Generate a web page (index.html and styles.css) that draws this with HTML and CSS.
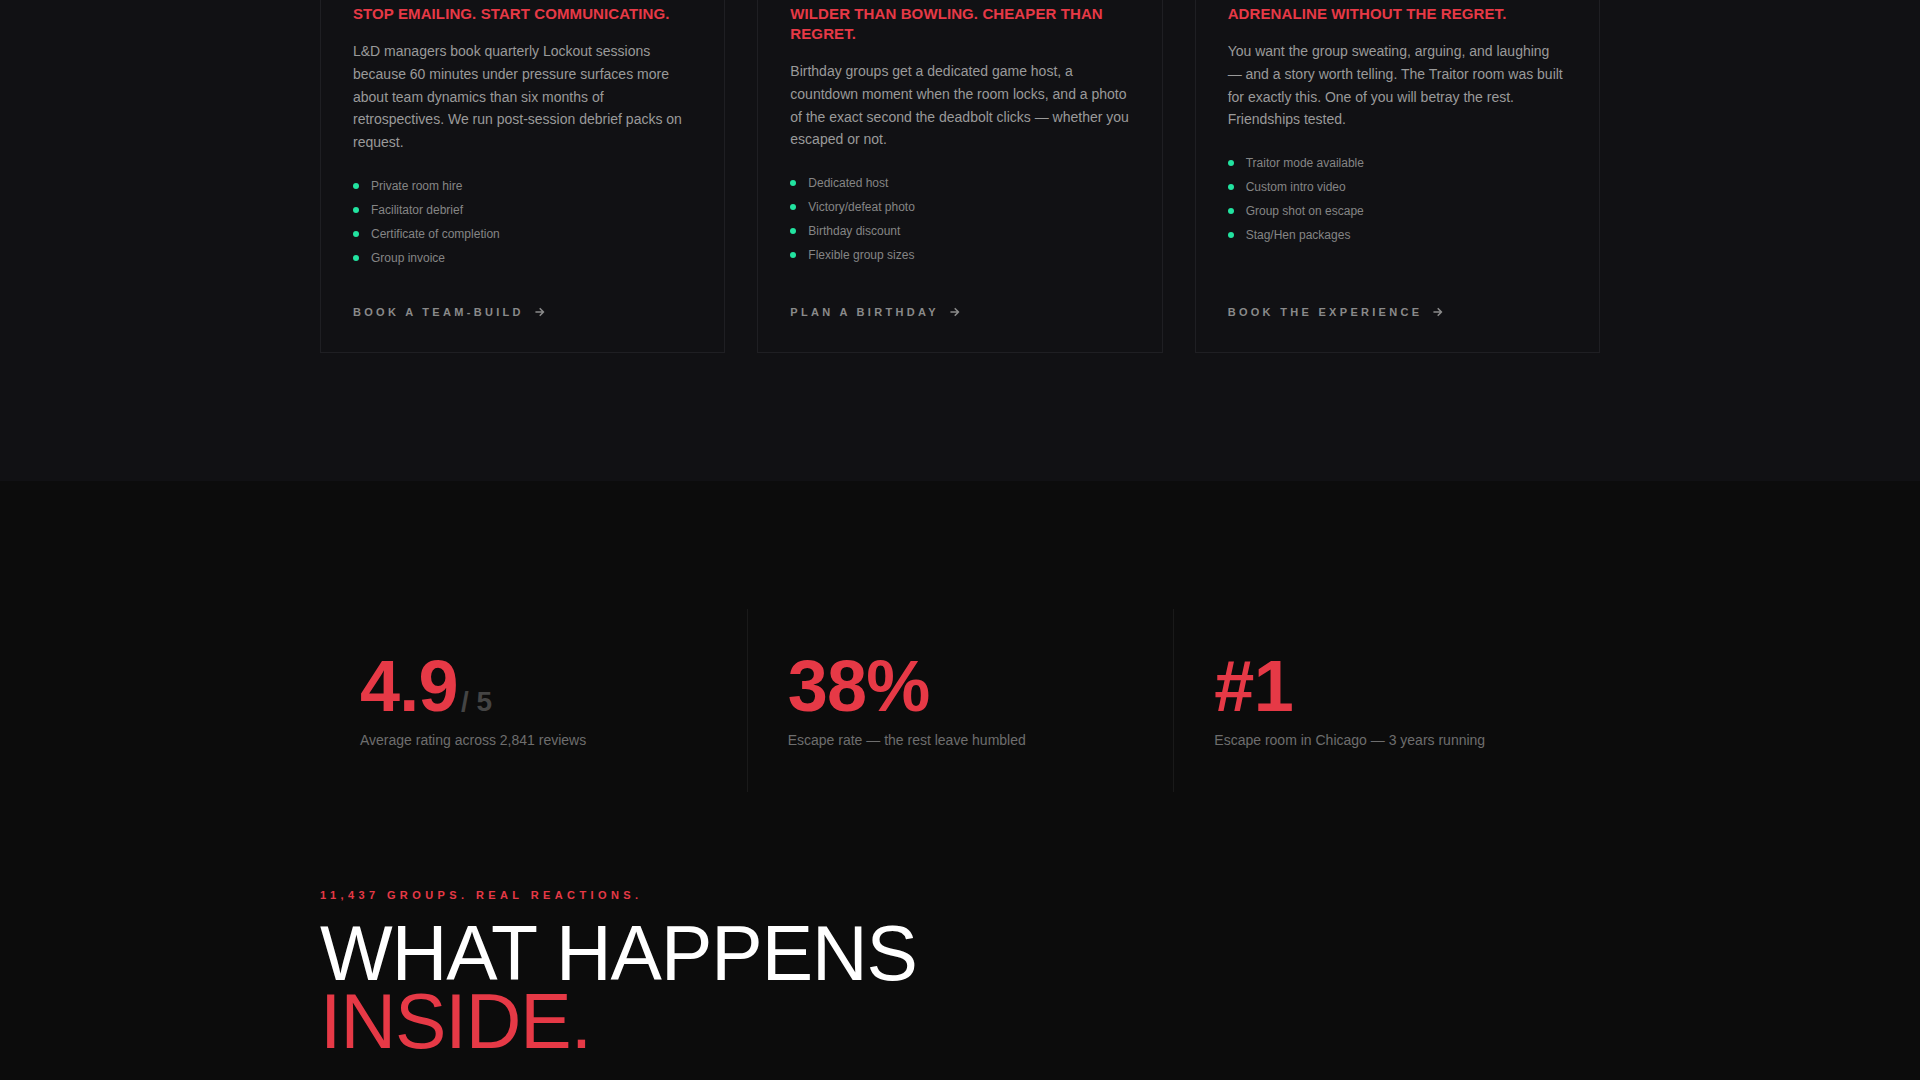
FILE: index.html
```html
<!DOCTYPE html>
<html lang="en">
<head>
<meta charset="utf-8">
<title>Lockout — Groups</title>
<link rel="stylesheet" href="styles.css">
</head>
<body>
<section class="audiences">
  <div class="container cards">
    <article class="card">
      <h3 class="card-title">Stop emailing. Start communicating.</h3>
      <p class="card-text">L&amp;D managers book quarterly Lockout sessions because 60 minutes under pressure surfaces more about team dynamics than six months of retrospectives. We run post-session debrief packs on request.</p>
      <ul class="perks">
        <li>Private room hire</li>
        <li>Facilitator debrief</li>
        <li>Certificate of completion</li>
        <li>Group invoice</li>
      </ul>
      <a class="card-cta" href="#">Book a team-build <svg class="arrow" width="10" height="10" viewBox="0 0 10 10"><path d="M1 5h7.5M5.2 1.7L8.5 5L5.2 8.3" fill="none" stroke="currentColor" stroke-width="1.6" stroke-linecap="round" stroke-linejoin="round"/></svg></a>
    </article>
    <article class="card">
      <h3 class="card-title">Wilder than bowling. Cheaper than regret.</h3>
      <p class="card-text">Birthday groups get a dedicated game host, a countdown moment when the room locks, and a photo of the exact second the deadbolt clicks — whether you escaped or not.</p>
      <ul class="perks">
        <li>Dedicated host</li>
        <li>Victory/defeat photo</li>
        <li>Birthday discount</li>
        <li>Flexible group sizes</li>
      </ul>
      <a class="card-cta" href="#">Plan a birthday <svg class="arrow" width="10" height="10" viewBox="0 0 10 10"><path d="M1 5h7.5M5.2 1.7L8.5 5L5.2 8.3" fill="none" stroke="currentColor" stroke-width="1.6" stroke-linecap="round" stroke-linejoin="round"/></svg></a>
    </article>
    <article class="card">
      <h3 class="card-title">Adrenaline without the regret.</h3>
      <p class="card-text">You want the group sweating, arguing, and laughing — and a story worth telling. The Traitor room was built for exactly this. One of you will betray the rest. Friendships tested.</p>
      <ul class="perks">
        <li>Traitor mode available</li>
        <li>Custom intro video</li>
        <li>Group shot on escape</li>
        <li>Stag/Hen packages</li>
      </ul>
      <a class="card-cta" href="#">Book the experience <svg class="arrow" width="10" height="10" viewBox="0 0 10 10"><path d="M1 5h7.5M5.2 1.7L8.5 5L5.2 8.3" fill="none" stroke="currentColor" stroke-width="1.6" stroke-linecap="round" stroke-linejoin="round"/></svg></a>
    </article>
  </div>
</section>

<section class="stats">
  <div class="container stat-grid">
    <div class="stat">
      <div class="stat-num">4.9<span class="stat-sub">/ 5</span></div>
      <p class="stat-label">Average rating across 2,841 reviews</p>
    </div>
    <div class="stat">
      <div class="stat-num">38%</div>
      <p class="stat-label">Escape rate — the rest leave humbled</p>
    </div>
    <div class="stat">
      <div class="stat-num">#1</div>
      <p class="stat-label">Escape room in Chicago — 3 years running</p>
    </div>
  </div>
</section>

<section class="reactions">
  <div class="container">
    <p class="eyebrow">11,437 groups. Real reactions.</p>
    <h2 class="headline"><span class="headline-line">What happens</span><span class="headline-line accent">inside.</span></h2>
  </div>
</section>
</body>
</html>
```

FILE: styles.css
```css
* { box-sizing: border-box; }

body {
  margin: 0;
  background: #0c0c0c;
  font-family: "Liberation Sans", Arial, sans-serif;
}

.container {
  width: 1280px;
  margin: 0 auto;
}

/* ---------- audience cards ---------- */
.audiences {
  background: #111114;
  padding: 0 0 128px;
}

.cards {
  display: grid;
  grid-template-columns: repeat(3, 1fr);
  gap: 32px;
}

.card {
  display: flex;
  flex-direction: column;
  background: #111114;
  border: 1px solid #1f1f23;
  border-top: 0;
  padding: 4px 32px 32px;
}

.card-title {
  margin: 0;
  font-size: 15px;
  line-height: 20px;
  font-weight: 700;
  letter-spacing: 0.1px;
  text-transform: uppercase;
  color: #e63946;
}

.card-text {
  margin: 16px 0 0;
  font-size: 14px;
  line-height: 22.75px;
  color: #9a9a9a;
}

.perks {
  list-style: none;
  margin: 23px 0 0;
  padding: 0;
  display: flex;
  flex-direction: column;
  gap: 6px;
  flex: 1;
}

.perks li {
  display: flex;
  align-items: center;
  gap: 12px;
  font-size: 12px;
  line-height: 18px;
  color: #858585;
}

.perks li::before {
  content: "";
  flex: none;
  width: 6px;
  height: 6px;
  border-radius: 50%;
  background: #22e3a0;
}

.card-cta {
  margin-top: 37px;
  display: flex;
  align-items: center;
  gap: 11px;
  font-size: 11px;
  line-height: 16px;
  font-weight: 700;
  letter-spacing: 0.3em;
  text-transform: uppercase;
  text-decoration: none;
  color: #8a8a8a;
}

.arrow { flex: none; }

/* ---------- stats ---------- */
.stats {
  background: #0c0c0c;
  padding: 128px 0 95px;
}

.stat-grid {
  display: grid;
  grid-template-columns: repeat(3, 1fr);
}

.stat {
  padding: 41px 40px 42px;
}

.stat + .stat {
  border-left: 1px solid #1a1a1a;
}

.stat-num {
  font-size: 72px;
  line-height: 1;
  font-weight: 700;
  letter-spacing: -0.01em;
  color: #e63946;
}

.stat-sub {
  margin-left: 3px;
  font-size: 28px;
  letter-spacing: 0;
  color: #444444;
}

.stat-label {
  margin: 8px 0 0;
  font-size: 14px;
  line-height: 20px;
  color: #6e6e6e;
}

/* ---------- reactions heading ---------- */
.reactions {
  background: #0c0c0c;
  padding: 0 0 120px;
}

.eyebrow {
  margin: 0 0 16px;
  font-size: 11px;
  line-height: 16px;
  font-weight: 700;
  letter-spacing: 0.4em;
  text-transform: uppercase;
  color: #e63946;
}

.headline {
  margin: 0;
  font-size: 77px;
  line-height: 68px;
  font-weight: 400;
  letter-spacing: -1px;
  text-transform: uppercase;
  color: #ffffff;
}

.headline-line {
  display: block;
}

.accent { color: #e63946; }
```
